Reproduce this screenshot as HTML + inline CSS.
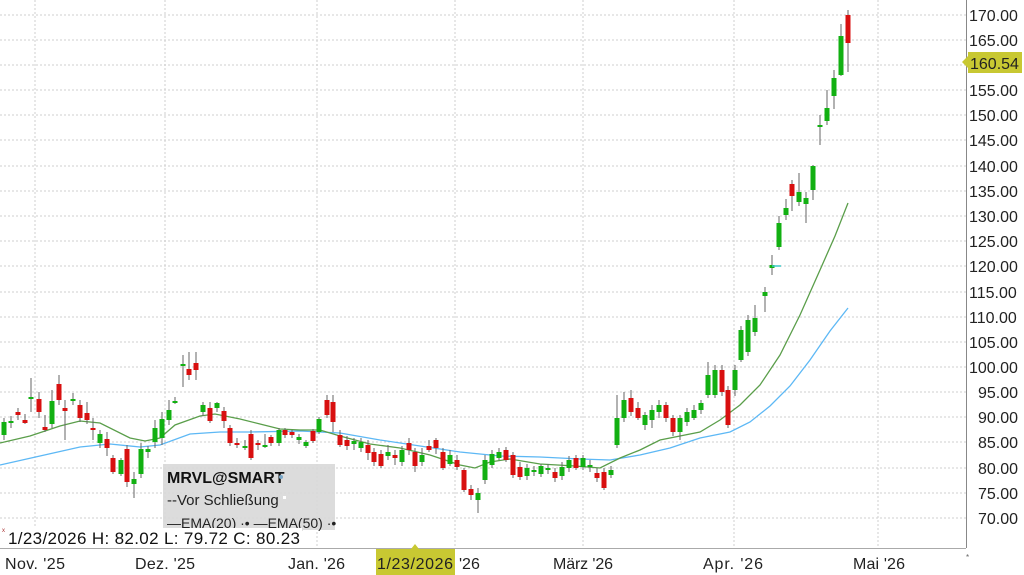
<!DOCTYPE html>
<html><head><meta charset="utf-8"><style>
html,body{margin:0;padding:0;background:#fff;}
body{width:1024px;height:575px;overflow:hidden;position:relative;font-family:"Liberation Sans",sans-serif;}
svg{position:absolute;left:0;top:0}
.g{fill:#12b012}.r{fill:#d81010}
.w{stroke:#666;stroke-width:1}
</style></head><body>
<svg width="1024" height="575" xmlns="http://www.w3.org/2000/svg">
<g stroke="#cfcfcf" stroke-dasharray="2,2" stroke-width="1">
<line x1="0" x2="966" y1="15" y2="15"/><line x1="0" x2="966" y1="40" y2="40"/><line x1="0" x2="966" y1="65" y2="65"/><line x1="0" x2="966" y1="90" y2="90"/><line x1="0" x2="966" y1="115" y2="115"/><line x1="0" x2="966" y1="140" y2="140"/><line x1="0" x2="966" y1="166" y2="166"/><line x1="0" x2="966" y1="191" y2="191"/><line x1="0" x2="966" y1="216" y2="216"/><line x1="0" x2="966" y1="241" y2="241"/><line x1="0" x2="966" y1="266" y2="266"/><line x1="0" x2="966" y1="292" y2="292"/><line x1="0" x2="966" y1="317" y2="317"/><line x1="0" x2="966" y1="342" y2="342"/><line x1="0" x2="966" y1="367" y2="367"/><line x1="0" x2="966" y1="392" y2="392"/><line x1="0" x2="966" y1="417" y2="417"/><line x1="0" x2="966" y1="442" y2="442"/><line x1="0" x2="966" y1="468" y2="468"/><line x1="0" x2="966" y1="493" y2="493"/><line x1="0" x2="966" y1="518" y2="518"/>
<line x1="35" x2="35" y1="0" y2="548"/><line x1="165" x2="165" y1="0" y2="548"/><line x1="317" x2="317" y1="0" y2="548"/><line x1="455" x2="455" y1="0" y2="548"/><line x1="583" x2="583" y1="0" y2="548"/><line x1="734" x2="734" y1="0" y2="548"/><line x1="878" x2="878" y1="0" y2="548"/>
</g>
<line x1="966.5" x2="966.5" y1="0" y2="548" stroke="#888"/>
<line x1="0" x2="966" y1="548.5" y2="548.5" stroke="#aaa"/>
<polyline fill="none" stroke="#5db8f5" stroke-width="1.3" points="0,465 40,456 80,447 110,444 140,447 160,445 190,434 220,432 250,432 300,431 340,433 380,440 420,446 460,452 500,456 540,457 580,459 610,460 640,455 670,448 700,438 730,432 750,422 770,406 790,386 810,360 830,331 848,308"/>
<polyline fill="none" stroke="#5a9e4a" stroke-width="1.3" points="0,443 30,436 60,426 80,421 100,423 130,438 145,441 160,438 175,425 200,416 215,414 240,419 260,424 280,429 300,430 320,430 340,436 370,444 400,448 430,455 460,465 475,468 490,462 510,459 540,464 575,466 600,468 620,458 640,450 660,440 700,432 720,420 740,405 760,385 780,355 800,315 820,270 835,236 848,203"/>
<path class="w" d="M4 418V440M11 416V428M18 408V420M25 414V424M31 378V412M39 392V418M45 415V432M52 390V428M59 375V405M65 400V440M73 393V405M80 400V422M87 402V424M93 418V440M100 430V448M107 432V456M113 455V474M121 458V476M127 445V487M134 472V498M141 443V478M148 446V458M155 420V448M162 412V445M169 400V425M175 397V404M183 355V387M189 352V380M196 352V380M203 402V416M210 402V423M217 402V412M224 407V428M230 425V446M237 438V448M245 440V450M251 430V460M258 440V450M265 434V448M271 435V446M279 428V446M285 428V438M292 430V438M299 434V444M306 440V448M313 429V443M319 417V434M327 395V418M333 395V432M340 430V447M347 436V450M354 438V450M361 438V452M368 440V460M374 448V466M381 450V468M388 445V460M395 450V465M402 446V466M409 438V455M415 448V472M422 448V466M429 440V452M436 438V454M443 448V470M450 450V466M457 455V470M464 468V492M471 485V500M478 488V513M485 455V484M492 450V468M499 448V460M506 447V462M513 452V478M520 462V480M527 464V480M534 466V476M541 464V477M548 464V474M555 468V482M562 462V480M569 456V472M576 455V470M583 455V470M590 460V472M597 468V482M604 468V490M611 466V478M617 395V448M624 392V422M631 390V416M638 402V420M645 412V430M652 405V428M659 400V418M666 402V422M673 415V436M680 415V440M687 408V426M694 405V420M701 400V414M708 362V398M715 365V398M722 365V396M728 386V428M735 365V396M741 326V362M748 315V356M755 305V336M765 287V312M772 255V275M779 216V250M786 199V220M792 180V211M799 173V206M806 192V223M813 165V200M820 115V145M827 90V125M834 70V109M841 24V76M848 10V72"/>
<g>
<rect class="g" x="1.5" y="422" width="5" height="13"/><rect class="g" x="8.5" y="421" width="5" height="2"/><rect class="r" x="15.5" y="412" width="5" height="3"/><rect class="r" x="22.5" y="420" width="5" height="3"/><rect class="g" x="28.5" y="397" width="5" height="2"/><rect class="r" x="36.5" y="399" width="5" height="13"/><rect class="r" x="42.5" y="427" width="5" height="3"/><rect class="g" x="49.5" y="401" width="5" height="23"/><rect class="r" x="56.5" y="384" width="5" height="16"/><rect class="r" x="62.5" y="408" width="5" height="3"/><rect class="g" x="70.5" y="399" width="5" height="2"/><rect class="r" x="77.5" y="405" width="5" height="13"/><rect class="r" x="84.5" y="413" width="5" height="7"/><rect class="r" x="90.5" y="428" width="5" height="2"/><rect class="g" x="97.5" y="434" width="5" height="9"/><rect class="r" x="104.5" y="439" width="5" height="9"/><rect class="r" x="110.5" y="458" width="5" height="14"/><rect class="g" x="118.5" y="460" width="5" height="14"/><rect class="r" x="124.5" y="449" width="5" height="33"/><rect class="g" x="131.5" y="479" width="5" height="5"/><rect class="g" x="138.5" y="449" width="5" height="25"/><rect class="g" x="145.5" y="449" width="5" height="3"/><rect class="g" x="152.5" y="428" width="5" height="14"/><rect class="g" x="159.5" y="419" width="5" height="19"/><rect class="g" x="166.5" y="410" width="5" height="10"/><rect class="g" x="172.5" y="401" width="5" height="2"/><rect class="g" x="180.5" y="364" width="5" height="2"/><rect class="r" x="186.5" y="369" width="5" height="6"/><rect class="r" x="193.5" y="363" width="5" height="7"/><rect class="g" x="200.5" y="405" width="5" height="7"/><rect class="r" x="207.5" y="408" width="5" height="13"/><rect class="g" x="214.5" y="403" width="5" height="5"/><rect class="r" x="221.5" y="411" width="5" height="10"/><rect class="r" x="227.5" y="428" width="5" height="15"/><rect class="r" x="234.5" y="443" width="5" height="2"/><rect class="g" x="242.5" y="446" width="5" height="2"/><rect class="r" x="248.5" y="434" width="5" height="24"/><rect class="r" x="255.5" y="443" width="5" height="2"/><rect class="g" x="262.5" y="445" width="5" height="2"/><rect class="r" x="268.5" y="437" width="5" height="6"/><rect class="g" x="276.5" y="430" width="5" height="13"/><rect class="r" x="282.5" y="430" width="5" height="5"/><rect class="r" x="289.5" y="432" width="5" height="3"/><rect class="g" x="296.5" y="437" width="5" height="3"/><rect class="g" x="303.5" y="442" width="5" height="4"/><rect class="r" x="310.5" y="431" width="5" height="10"/><rect class="g" x="316.5" y="419" width="5" height="13"/><rect class="r" x="324.5" y="400" width="5" height="15"/><rect class="r" x="330.5" y="402" width="5" height="20"/><rect class="r" x="337.5" y="435" width="5" height="10"/><rect class="r" x="344.5" y="440" width="5" height="6"/><rect class="g" x="351.5" y="441" width="5" height="3"/><rect class="g" x="358.5" y="442" width="5" height="6"/><rect class="r" x="365.5" y="445" width="5" height="8"/><rect class="r" x="371.5" y="452" width="5" height="10"/><rect class="r" x="378.5" y="454" width="5" height="12"/><rect class="g" x="385.5" y="452" width="5" height="4"/><rect class="r" x="392.5" y="455" width="5" height="3"/><rect class="g" x="399.5" y="450" width="5" height="12"/><rect class="r" x="406.5" y="443" width="5" height="7"/><rect class="r" x="412.5" y="452" width="5" height="14"/><rect class="g" x="419.5" y="455" width="5" height="7"/><rect class="r" x="426.5" y="446" width="5" height="4"/><rect class="r" x="433.5" y="440" width="5" height="8"/><rect class="r" x="440.5" y="452" width="5" height="16"/><rect class="g" x="447.5" y="455" width="5" height="9"/><rect class="r" x="454.5" y="460" width="5" height="7"/><rect class="r" x="461.5" y="470" width="5" height="20"/><rect class="r" x="468.5" y="489" width="5" height="6"/><rect class="g" x="475.5" y="493" width="5" height="7"/><rect class="g" x="482.5" y="460" width="5" height="20"/><rect class="g" x="489.5" y="454" width="5" height="11"/><rect class="g" x="496.5" y="452" width="5" height="6"/><rect class="r" x="503.5" y="450" width="5" height="10"/><rect class="r" x="510.5" y="455" width="5" height="20"/><rect class="r" x="517.5" y="467" width="5" height="10"/><rect class="g" x="524.5" y="468" width="5" height="8"/><rect class="g" x="531.5" y="470" width="5" height="2"/><rect class="g" x="538.5" y="466" width="5" height="8"/><rect class="g" x="545.5" y="468" width="5" height="2"/><rect class="r" x="552.5" y="472" width="5" height="6"/><rect class="g" x="559.5" y="467" width="5" height="9"/><rect class="g" x="566.5" y="460" width="5" height="8"/><rect class="r" x="573.5" y="458" width="5" height="10"/><rect class="g" x="580.5" y="458" width="5" height="9"/><rect class="g" x="587.5" y="465" width="5" height="2"/><rect class="r" x="594.5" y="473" width="5" height="5"/><rect class="r" x="601.5" y="472" width="5" height="16"/><rect class="g" x="608.5" y="470" width="5" height="5"/><rect class="g" x="614.5" y="418" width="5" height="27"/><rect class="g" x="621.5" y="400" width="5" height="18"/><rect class="r" x="628.5" y="398" width="5" height="14"/><rect class="r" x="635.5" y="408" width="5" height="10"/><rect class="g" x="642.5" y="415" width="5" height="10"/><rect class="g" x="649.5" y="410" width="5" height="10"/><rect class="g" x="656.5" y="405" width="5" height="7"/><rect class="r" x="663.5" y="405" width="5" height="13"/><rect class="r" x="670.5" y="418" width="5" height="14"/><rect class="g" x="677.5" y="418" width="5" height="14"/><rect class="g" x="684.5" y="412" width="5" height="10"/><rect class="g" x="691.5" y="410" width="5" height="8"/><rect class="g" x="698.5" y="403" width="5" height="7"/><rect class="g" x="705.5" y="375" width="5" height="20"/><rect class="g" x="712.5" y="370" width="5" height="25"/><rect class="r" x="719.5" y="370" width="5" height="22"/><rect class="r" x="725.5" y="390" width="5" height="35"/><rect class="g" x="732.5" y="370" width="5" height="20"/><rect class="g" x="738.5" y="330" width="5" height="30"/><rect class="g" x="745.5" y="320" width="5" height="32"/><rect class="g" x="752.5" y="318" width="5" height="14"/><rect class="g" x="762.5" y="292" width="5" height="4"/><rect class="g" x="769.5" y="265" width="5" height="3"/><rect class="g" x="776.5" y="223" width="5" height="24"/><rect class="g" x="783.5" y="208" width="5" height="7"/><rect class="r" x="789.5" y="184" width="5" height="12"/><rect class="g" x="796.5" y="192" width="5" height="10"/><rect class="g" x="803.5" y="198" width="5" height="6"/><rect class="g" x="810.5" y="166" width="5" height="24"/><rect class="g" x="817.5" y="125" width="5" height="2"/><rect class="g" x="824.5" y="108" width="5" height="13"/><rect class="g" x="831.5" y="78" width="5" height="18"/><rect class="g" x="838.5" y="36" width="5" height="39"/><rect class="r" x="845.5" y="15" width="5" height="28"/>
</g>
<line x1="772" x2="781" y1="266" y2="266" stroke="#3cc8c8" stroke-width="1.5"/>
<g font-size="16" fill="#222" font-family="Liberation Sans,sans-serif">
<text x="969" y="21">170.00</text><text x="969" y="46">165.00</text><text x="969" y="96">155.00</text><text x="969" y="121">150.00</text><text x="969" y="146">145.00</text><text x="969" y="172">140.00</text><text x="969" y="197">135.00</text><text x="969" y="222">130.00</text><text x="969" y="247">125.00</text><text x="969" y="272">120.00</text><text x="969" y="298">115.00</text><text x="969" y="323">110.00</text><text x="969" y="348">105.00</text><text x="969" y="373">100.00</text><text x="978" y="398">95.00</text><text x="978" y="423">90.00</text><text x="978" y="448">85.00</text><text x="978" y="474">80.00</text><text x="978" y="499">75.00</text><text x="978" y="524">70.00</text>
</g>
<polygon points="962,62 968,56 968,52 1022,52 1022,73 968,73 968,68" fill="#c8c832"/>
<text x="970" y="69" font-size="16" fill="#222">160.54</text>
<rect x="163" y="464" width="172" height="66" fill="#d8d8d8" opacity="0.9"/>
<text x="167" y="483" font-size="16" font-weight="bold" fill="#111">MRVL@SMART</text>
<circle cx="281" cy="477" r="2" fill="#7aa7c8"/>
<text x="167" y="505" font-size="15" fill="#222">--Vor Schließung</text>
<rect x="283" y="496" width="3" height="3" fill="#fff"/>
<text x="167" y="528" font-size="14" fill="#222">—EMA(20) ·• —EMA(50) ·•</text>
<rect x="0" y="528" width="302" height="19" fill="#fff"/>
<text x="2" y="532" font-size="6" fill="#a33">x</text>
<text x="8" y="544" font-size="17" fill="#111" textLength="292">1/23/2026 H: 82.02 L: 79.72 C: 80.23</text>
<g font-size="16" fill="#222">
<text x="5" y="569" textLength="60">Nov. '25</text><text x="135" y="569" textLength="60">Dez. '25</text><text x="288" y="569" textLength="57">Jan. '26</text><text x="459" y="569">'26</text><text x="553" y="569" textLength="60">März '26</text><text x="703" y="569" textLength="60">Apr. '26</text><text x="853" y="569" textLength="52">Mai '26</text>
</g>
<polygon points="376,549 411,549 415,544 419,549 455,549 455,575 376,575" fill="#c8c832"/>
<text x="377" y="569" font-size="16" fill="#222" textLength="76">1/23/2026</text>
<text x="966" y="560" font-size="8" fill="#666">*</text>
</svg>
</body></html>
